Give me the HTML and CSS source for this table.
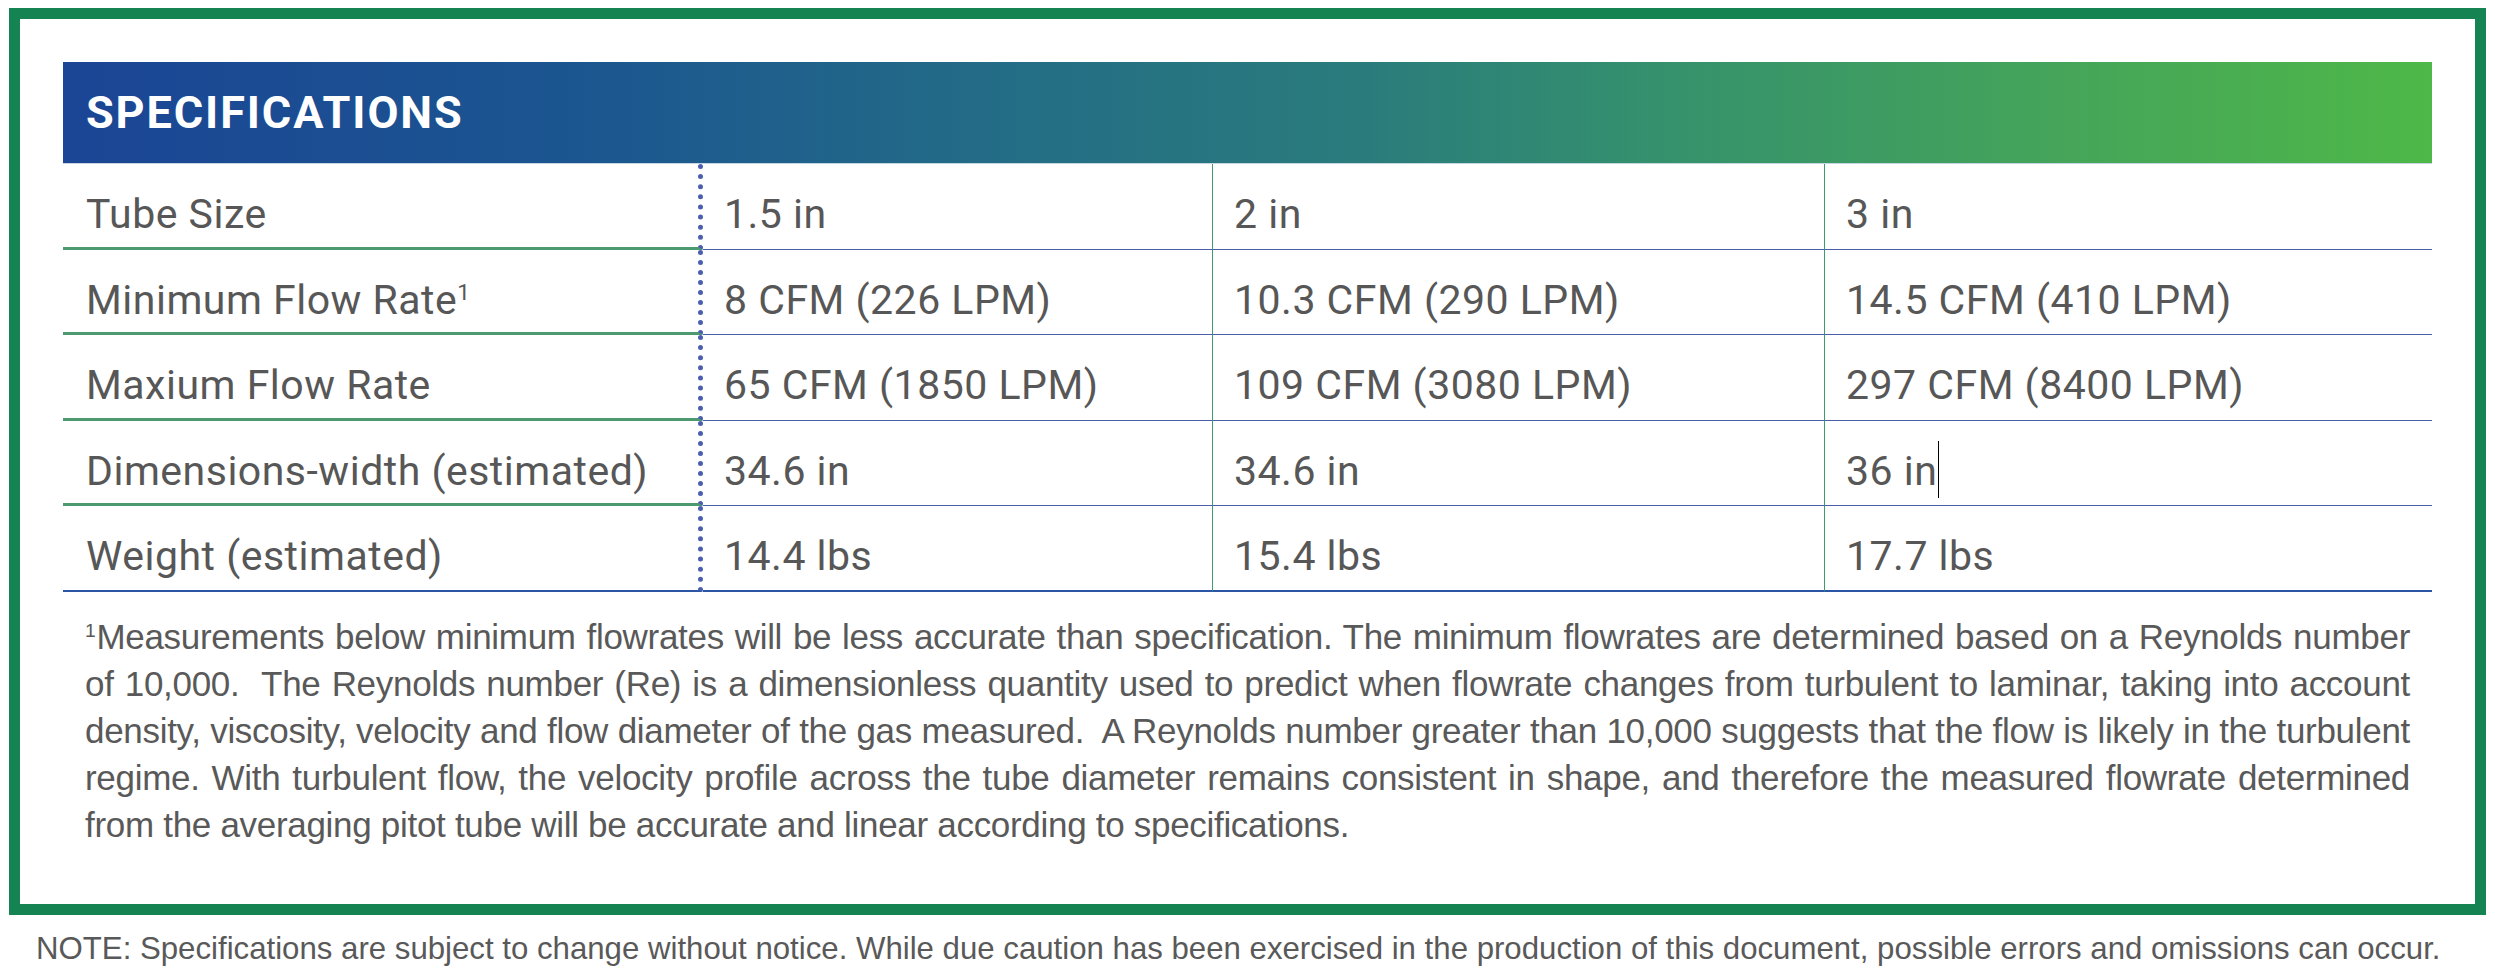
FILE: index.html
```html
<!DOCTYPE html>
<html lang="en">
<head>
<meta charset="utf-8">
<title>Specifications</title>
<link rel="stylesheet" href="styles.css">
</head>
<body>
<section class="frame">
  <h2 class="spec-header">SPECIFICATIONS</h2>
  <table class="spec-table">
    <colgroup>
      <col class="col-label">
      <col class="col-a">
      <col class="col-b">
      <col class="col-c">
    </colgroup>
    <tbody>
      <tr>
        <th class="label">Tube Size</th>
        <td class="val">1.5 in</td>
        <td class="val">2 in</td>
        <td class="val last">3 in</td>
      </tr>
      <tr>
        <th class="label">Minimum Flow Rate<span class="sup">1</span></th>
        <td class="val">8 CFM (226 LPM)</td>
        <td class="val">10.3 CFM (290 LPM)</td>
        <td class="val last">14.5 CFM (410 LPM)</td>
      </tr>
      <tr>
        <th class="label">Maxium Flow Rate</th>
        <td class="val">65 CFM (1850 LPM)</td>
        <td class="val">109 CFM (3080 LPM)</td>
        <td class="val last">297 CFM (8400 LPM)</td>
      </tr>
      <tr>
        <th class="label">Dimensions-width (estimated)</th>
        <td class="val">34.6 in</td>
        <td class="val">34.6 in</td>
        <td class="val last">36 in<span class="caret"></span></td>
      </tr>
      <tr class="final">
        <th class="label">Weight (estimated)</th>
        <td class="val">14.4 lbs</td>
        <td class="val">15.4 lbs</td>
        <td class="val last">17.7 lbs</td>
      </tr>
    </tbody>
  </table>
  <p class="footnote"><span class="sup fn-sup">1</span>Measurements below minimum flowrates will be less accurate than specification. The minimum flowrates are determined based on a Reynolds number of 10,000.&nbsp; The Reynolds number (Re) is a dimensionless quantity used to predict when flowrate changes from turbulent to laminar, taking into account density, viscosity, velocity and flow diameter of the gas measured.&nbsp; A Reynolds number greater than 10,000 suggests that the flow is likely in the turbulent regime. With turbulent flow, the velocity profile across the tube diameter remains consistent in shape, and therefore the measured flowrate determined from the averaging pitot tube will be accurate and linear according to specifications.</p>
</section>
<p class="note">NOTE: Specifications are subject to change without notice. While due caution has been exercised in the production of this document, possible errors and omissions can occur.</p>
</body>
</html>
```
FILE: styles.css
```css
html, body {
  margin: 0;
  padding: 0;
  background: #ffffff;
}

body {
  font-family: "Liberation Sans", Arial, sans-serif;
  color: #575757;
}

.frame {
  margin: 8px 9px 0 9px;
  border: 11px solid #158452;
  padding: 43px 43px 56px 43px;
}

.spec-header {
  margin: 0;
  height: 101px;
  border-bottom: 1px solid #c6d6e0;
  display: flex;
  align-items: center;
  padding-left: 23px;
  font-family: Roboto, "Liberation Sans", sans-serif;
  font-weight: 700;
  font-size: 45px;
  letter-spacing: 1.9px;
  color: #ffffff;
  background: linear-gradient(90deg, #1b4595 0%, #1b5690 22%, #246d86 40%, #2a7c7c 55%, #35926c 68%, #45a45a 84%, #4eb848 100%);
}

.spec-table {
  width: 2369px;
  table-layout: fixed;
  border-collapse: separate;
  border-spacing: 0;
  font-family: Roboto, "Liberation Sans", sans-serif;
  font-size: 41px;
  line-height: 48px;
  letter-spacing: 0.5px;
  color: #575757;
}

.col-label { width: 640px; }
.col-a { width: 510px; }
.col-b { width: 612px; }
.col-c { width: 607px; }

.spec-table th,
.spec-table td {
  text-align: left;
  font-weight: 400;
  vertical-align: baseline;
  padding: 26px 0 0 21px;
  white-space: nowrap;
}

.spec-table .label {
  padding-left: 23px;
  padding-bottom: 8.6px;
  border-bottom: 3px solid #4e9a70;
  border-right: 5px dotted #4a5fae;
}

.spec-table .val {
  padding-bottom: 10.6px;
  border-bottom: 1px solid #4c5ea8;
  border-right: 1px solid #3f9a6c;
}

.spec-table .val.last {
  border-right: none;
}

.spec-table .final .label,
.spec-table .final .val {
  border-bottom: 2px solid #2b56a6;
}

.spec-table .final .label {
  padding-bottom: 9.6px;
}

.spec-table .final .val {
  padding-bottom: 9.6px;
}

.sup {
  font-size: 0.55em;
  line-height: 0;
  vertical-align: 0.6em;
}

.fn-sup {
  margin-right: 1px;
}

.caret {
  display: inline-block;
  width: 1px;
  height: 57px;
  margin: -9px 0 -3px 1px;
  background: #000000;
  vertical-align: -10px;
}

.footnote {
  margin: 21px 0 0 0;
  padding: 0 22px;
  font-family: "Liberation Sans", Arial, sans-serif;
  font-size: 35px;
  letter-spacing: -0.3px;
  line-height: 47px;
  text-align: justify;
  color: #595959;
}

.note {
  margin: 16px 0 0 36px;
  font-family: "Liberation Sans", Arial, sans-serif;
  font-size: 31.2px;
  color: #595959;
}
```
